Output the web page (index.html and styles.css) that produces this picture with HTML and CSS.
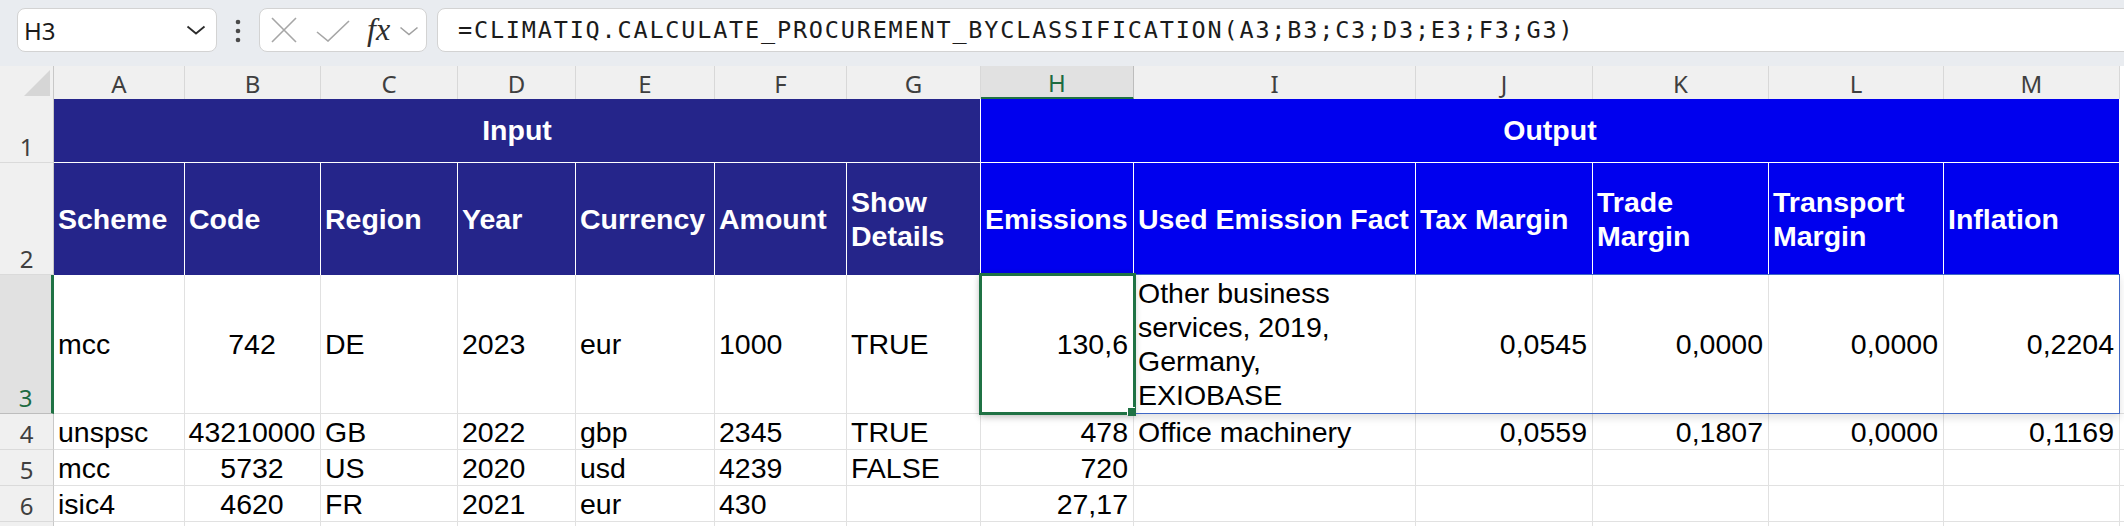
FILE: index.html
```html
<!DOCTYPE html>
<html>
<head>
<meta charset="utf-8">
<link rel="stylesheet" href="styles.css">
</head>
<body>
<div class="app">
  <div class="toolbar">
    <div class="namebox">
      <span>H3</span>
      <svg class="chev" width="20" height="10" viewBox="0 0 20 10"><path d="M1.5 1.5 L10 8.5 L18.5 1.5" fill="none" stroke="#2b2b2b" stroke-width="1.8"/></svg>
    </div>
    <div class="more">
      <svg width="8" height="24" viewBox="0 0 8 24"><circle cx="4" cy="3" r="2.3" fill="#4a4a4a"/><circle cx="4" cy="12" r="2.3" fill="#4a4a4a"/><circle cx="4" cy="21" r="2.3" fill="#4a4a4a"/></svg>
    </div>
    <div class="fxbox">
      <svg class="ico-x" width="26" height="26" viewBox="0 0 26 26"><path d="M1 1 L25 25 M25 1 L1 25" stroke="#a6a6a6" stroke-width="1.6" fill="none"/></svg>
      <svg class="ico-ok" width="34" height="22" viewBox="0 0 34 22"><path d="M1 12 L12 21 L33 1" stroke="#a6a6a6" stroke-width="1.6" fill="none"/></svg>
      <span class="fx">fx</span>
      <svg class="chev-sm" width="20" height="10" viewBox="0 0 20 10"><path d="M1.5 1.5 L10 8.5 L18.5 1.5" fill="none" stroke="#a0a0a0" stroke-width="1.6"/></svg>
    </div>
    <div class="formula">=CLIMATIQ.CALCULATE_PROCUREMENT_BYCLASSIFICATION(A3;B3;C3;D3;E3;F3;G3)</div>
  </div>

  <div class="sheet">
    <div class="row colhdr">
      <div class="corner"><svg width="54" height="33" viewBox="0 0 54 33"><path d="M50 4 L50 30 L24 30 Z" fill="#d6d6d6"/></svg></div>
      <div class="ch">A</div><div class="ch">B</div><div class="ch">C</div><div class="ch">D</div>
      <div class="ch">E</div><div class="ch">F</div><div class="ch">G</div><div class="ch sel">H</div>
      <div class="ch">I</div><div class="ch">J</div><div class="ch">K</div><div class="ch">L</div>
      <div class="ch">M</div><div class="ch tail"></div>
    </div>

    <div class="row r1">
      <div class="rh">1</div>
      <div class="band input">Input</div>
      <div class="band output">Output</div>
      <div class="tail"></div>
    </div>

    <div class="row r2">
      <div class="rh">2</div>
      <div class="hc in">Scheme</div>
      <div class="hc in">Code</div>
      <div class="hc in">Region</div>
      <div class="hc in">Year</div>
      <div class="hc in">Currency</div>
      <div class="hc in">Amount</div>
      <div class="hc in wrap">Show Details</div>
      <div class="hc out">Emissions</div>
      <div class="hc out">Used Emission Fact</div>
      <div class="hc out">Tax Margin</div>
      <div class="hc out wrap">Trade Margin</div>
      <div class="hc out wrap">Transport Margin</div>
      <div class="hc out">Inflation</div>
      <div class="tail"></div>
    </div>

    <div class="row r3">
      <div class="rh selrow">3</div>
      <div class="c">mcc</div>
      <div class="c ctr">742</div>
      <div class="c">DE</div>
      <div class="c">2023</div>
      <div class="c">eur</div>
      <div class="c">1000</div>
      <div class="c">TRUE</div>
      <div class="c num active">130,6<span class="spill"></span><span class="handle"></span></div>
      <div class="c wraptext">Other business<br>services, 2019,<br>Germany,<br>EXIOBASE</div>
      <div class="c num">0,0545</div>
      <div class="c num">0,0000</div>
      <div class="c num">0,0000</div>
      <div class="c num">0,2204</div>
      <div class="c tail"></div>
    </div>

    <div class="row rn">
      <div class="rh">4</div>
      <div class="c">unspsc</div>
      <div class="c ctr">43210000</div>
      <div class="c">GB</div>
      <div class="c">2022</div>
      <div class="c">gbp</div>
      <div class="c">2345</div>
      <div class="c">TRUE</div>
      <div class="c num">478</div>
      <div class="c">Office machinery</div>
      <div class="c num">0,0559</div>
      <div class="c num">0,1807</div>
      <div class="c num">0,0000</div>
      <div class="c num">0,1169</div>
      <div class="c tail"></div>
    </div>

    <div class="row rn">
      <div class="rh">5</div>
      <div class="c">mcc</div>
      <div class="c ctr">5732</div>
      <div class="c">US</div>
      <div class="c">2020</div>
      <div class="c">usd</div>
      <div class="c">4239</div>
      <div class="c">FALSE</div>
      <div class="c num">720</div>
      <div class="c"></div>
      <div class="c"></div>
      <div class="c"></div>
      <div class="c"></div>
      <div class="c"></div>
      <div class="c tail"></div>
    </div>

    <div class="row rn">
      <div class="rh">6</div>
      <div class="c">isic4</div>
      <div class="c ctr">4620</div>
      <div class="c">FR</div>
      <div class="c">2021</div>
      <div class="c">eur</div>
      <div class="c">430</div>
      <div class="c"></div>
      <div class="c num">27,17</div>
      <div class="c"></div>
      <div class="c"></div>
      <div class="c"></div>
      <div class="c"></div>
      <div class="c"></div>
      <div class="c tail"></div>
    </div>

    <div class="row rn">
      <div class="rh"></div>
      <div class="c"></div><div class="c"></div><div class="c"></div><div class="c"></div>
      <div class="c"></div><div class="c"></div><div class="c"></div><div class="c"></div>
      <div class="c"></div><div class="c"></div><div class="c"></div><div class="c"></div>
      <div class="c"></div><div class="c tail"></div>
    </div>
  </div>
</div>
</body>
</html>
```

FILE: styles.css
```css
* { box-sizing: border-box; }

body {
  margin: 0;
  background: #ffffff;
  font-family: "Liberation Sans", Arial, sans-serif;
}

.app {
  width: 2124px;
  height: 526px;
  overflow: hidden;
  background: #ffffff;
}

/* ---------- toolbar ---------- */
.toolbar {
  display: flex;
  align-items: center;
  height: 66px;
  padding: 8px 0 14px 17px;
  background: #e9ecf0;
}

.namebox {
  width: 200px;
  height: 44px;
  flex: none;
  display: flex;
  align-items: center;
  justify-content: space-between;
  padding: 0 10px 0 6px;
  background: #ffffff;
  border: 1px solid #d3d3d3;
  border-radius: 8px;
  font-family: "Noto Sans", "Open Sans", sans-serif;
  font-size: 24px;
  color: #1b1b1b;
}

.more {
  width: 42px;
  flex: none;
  display: flex;
  justify-content: center;
  padding-top: 2px;
}

.fxbox {
  width: 168px;
  height: 44px;
  flex: none;
  display: flex;
  align-items: center;
  padding-left: 11px;
  background: #ffffff;
  border: 1px solid #d3d3d3;
  border-radius: 8px;
}

.ico-x { margin-right: 19px; }
.ico-ok { margin-right: 17px; margin-top: 2px; }

.fx {
  font-family: "Liberation Serif", "DejaVu Serif", serif;
  font-style: italic;
  font-size: 32px;
  color: #2e2e2e;
  margin-right: 9px;
  margin-top: -2px;
}

.chev-sm { margin-top: 2px; }

.formula {
  flex: 1;
  height: 44px;
  margin-left: 10px;
  margin-right: -14px;
  display: flex;
  align-items: center;
  padding-left: 20px;
  background: #ffffff;
  border: 1px solid #d3d3d3;
  border-radius: 8px;
  font-family: "DejaVu Sans Mono", "Liberation Mono", monospace;
  font-size: 23.5px;
  letter-spacing: 1.8px;
  color: #1b1b1b;
  white-space: nowrap;
}

/* ---------- sheet ---------- */
.row {
  display: grid;
  grid-template-columns: 54px 131px 136px 137px 118px 139px 132px 134px 153px 282px 177px 176px 175px 176px 4px;
}

.colhdr { height: 33px; }
.r1 { height: 64px; }
.r2 { height: 112px; }
.r3 { height: 139px; }
.rn { height: 36px; }

.corner {
  background: #f0f0f0;
  border-right: 1px solid #c8c8c8;
  border-bottom: 1px solid #c4c4c4;
}
.corner svg { display: block; }

.ch {
  display: flex;
  align-items: flex-end;
  justify-content: center;
  background: #f0f0f0;
  border-right: 1px solid #d8d8d8;
  border-bottom: 1px solid #c4c4c4;
  font-family: "Noto Sans", "Open Sans", sans-serif;
  font-size: 24px;
  line-height: 30px;
  color: #3f3f3f;
}

.ch.sel {
  background: #e1e1e1;
  color: #1d6b41;
  border-right-color: #bdbdbd;
  border-bottom: 3px solid #1f7244;
  line-height: 28px;
}

.ch.tail { border-right: none; }

.rh {
  display: flex;
  align-items: flex-end;
  justify-content: center;
  background: #f0f0f0;
  border-right: 1px solid #c8c8c8;
  border-bottom: 1px solid #dadada;
  font-family: "Noto Sans", "Open Sans", sans-serif;
  font-size: 24px;
  line-height: 31px;
  color: #3f3f3f;
}

.rh.selrow {
  background: #e1e1e1;
  color: #1d6b41;
  border-right: 3px solid #1f7244;
  border-bottom-color: #bdbdbd;
}

/* header bands */
.band {
  display: flex;
  align-items: center;
  justify-content: center;
  color: #ffffff;
  font-weight: bold;
  font-size: 28.5px;
  border-right: 1px solid #ffffff;
  border-bottom: 1px solid #ffffff;
}

.band.input { grid-column: span 7; background: #25258a; }
.band.output { grid-column: span 6; background: #0000ee; }

.hc {
  display: flex;
  align-items: center;
  padding: 0 4px 0 4px;
  color: #ffffff;
  font-weight: bold;
  font-size: 28.5px;
  line-height: 34px;
  white-space: nowrap;
  overflow: hidden;
  border-right: 1px solid #ffffff;
}

.hc.in { background: #25258a; }
.hc.out { background: #0000ee; }
.hc.wrap { white-space: normal; }

.tail { background: #ffffff; }

/* data cells */
.c {
  display: flex;
  align-items: flex-end;
  padding: 0 5px 0 4px;
  border-right: 1px solid #e1e1e1;
  border-bottom: 1px solid #e1e1e1;
  font-size: 28.5px;
  line-height: 34px;
  color: #000000;
  white-space: nowrap;
  overflow: hidden;
}

.r3 .c { align-items: center; }

.c.num { justify-content: flex-end; }
.c.ctr { justify-content: center; }
.c.tail { border-right: none; }

.c.wraptext {
  white-space: normal;
  align-items: flex-start;
  padding-top: 1px;
}

.c.active {
  position: relative;
  overflow: visible;
}

.c.active::after {
  content: "";
  position: absolute;
  left: -2px;
  top: -2px;
  right: -3px;
  bottom: -2px;
  border: 3px solid #1f7244;
  box-shadow: 0 1px 6px rgba(0, 0, 0, 0.16);
  z-index: 3;
}

.spill {
  position: absolute;
  left: -1px;
  top: -1px;
  width: 1140px;
  height: 140px;
  border: 1px solid #4068c6;
  box-shadow: 0 4px 8px rgba(0, 0, 0, 0.12);
  z-index: 2;
  pointer-events: none;
}

.handle {
  position: absolute;
  right: -3px;
  bottom: -3px;
  width: 8px;
  height: 8px;
  background: #1f7244;
  box-shadow: -1px -1px 0 #ffffff;
  z-index: 4;
}
```
